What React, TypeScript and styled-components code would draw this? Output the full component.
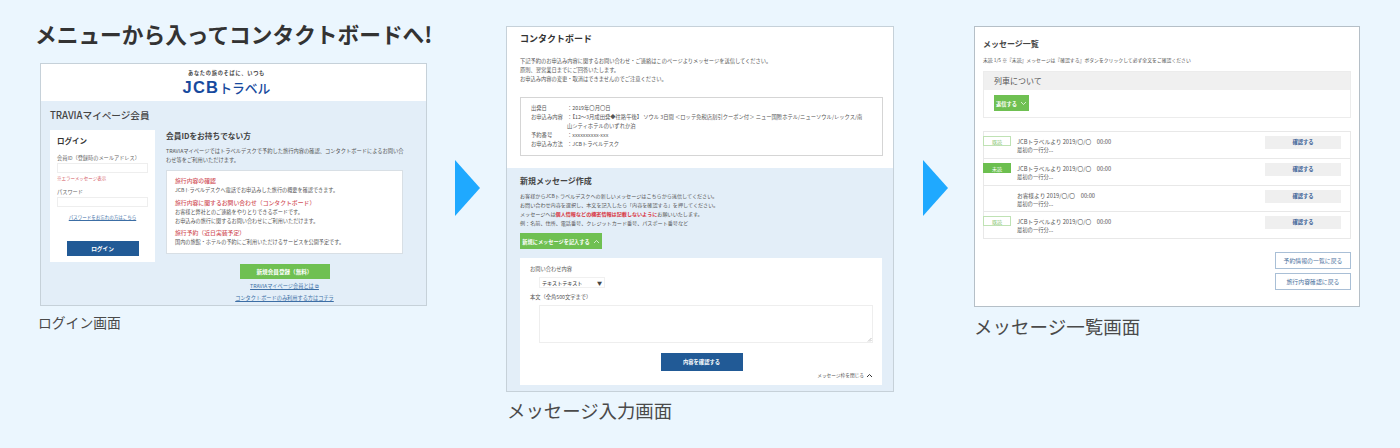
import * as React from 'react'
import styled, { createGlobalStyle } from 'styled-components'

const GlobalStyle = createGlobalStyle`
  html, body {
    margin: 0;
    padding: 0;
    background: #ebf6fe;
  }
  body {
    font-family: 'Noto Sans CJK JP', 'Liberation Sans', sans-serif;
    color: #444;
  }
`

const Page = styled.div`
  display: flex;
  align-items: flex-start;
  width: 1400px;
  height: 448px;
  padding-left: 36px;
  box-sizing: border-box;
  overflow: hidden;
`

const Column = styled.div<{ $width: number; $top: number }>`
  width: ${p => p.$width}px;
  padding-top: ${p => p.$top}px;
  flex: none;
`

const Headline = styled.h1`
  margin: 0 0 0 -1px;
  height: 63px;
  font-size: 21.7px;
  line-height: 67px;
  font-weight: 700;
  color: #333;
  white-space: nowrap;
`

const Arrow = styled.div<{ $left: number; $right: number }>`
  flex: none;
  width: 0;
  height: 0;
  margin: 160px ${p => p.$right}px 0 ${p => p.$left}px;
  border-left: 25px solid #1fa9ff;
  border-top: 28px solid transparent;
  border-bottom: 28px solid transparent;
`

const Shot = styled.div<{ $height: number; $indent?: number; $edge?: string }>`
  height: ${p => p.$height}px;
  margin-left: ${p => p.$indent ?? 0}px;
  box-sizing: border-box;
  border: 1px solid ${p => p.$edge ?? '#c6d1d9'};
  background: #fff;
  overflow: hidden;
  display: flex;
  flex-direction: column;
`

const Caption = styled.div<{ $size: number; $top: number; $indent?: number }>`
  margin-top: ${p => p.$top}px;
  margin-left: ${p => p.$indent ?? 0}px;
  font-size: ${p => p.$size}px;
  line-height: 1.3;
  color: #4a4a4a;
  white-space: nowrap;
`

const BrandBar = styled.div`
  height: 37px;
  flex: none;
  display: flex;
  flex-direction: column;
  align-items: center;
  padding: 5px 14px 0 0;
  box-sizing: border-box;
`

const Tagline = styled.div`
  font-size: 5.2px;
  line-height: 8px;
  font-weight: 700;
  letter-spacing: 0.75px;
  color: #444;
`

const Logo = styled.div`
  margin-top: 2px;
  display: flex;
  align-items: baseline;
  font-family: 'Liberation Sans', 'Noto Sans CJK JP', sans-serif;
  font-size: 16.5px;
  line-height: 17px;
  font-weight: 700;
  color: #174a9e;
  letter-spacing: 1.2px;
`

const LogoKana = styled.span`
  font-family: 'Noto Sans CJK JP', sans-serif;
  font-weight: 500;
  font-size: 12.8px;
  letter-spacing: 0;
`

const TintBody = styled.div`
  flex: 1;
  background: #e3eef8;
  padding: 6px 9px 0;
`

const PageTitle = styled.div`
  font-size: 9.6px;
  line-height: 16px;
  color: #444;
  font-weight: 500;
`

const LoginGrid = styled.div`
  display: flex;
  margin-top: 7px;
  gap: 11px;
`

const LoginCard = styled.div`
  width: 105px;
  height: 132px;
  flex: none;
  background: #fff;
  padding: 5px 7px 0;
  box-sizing: border-box;
  display: flex;
  flex-direction: column;
`

const CardTitle = styled.div`
  font-size: 7.5px;
  line-height: 12px;
  font-weight: 700;
  color: #333;
`

const Tiny = styled.div<{ $size?: number; $line?: number; $color?: string; $top?: number; $weight?: number }>`
  font-size: ${p => p.$size ?? 5.25}px;
  line-height: ${p => p.$line ?? 9}px;
  color: ${p => p.$color ?? '#555'};
  margin-top: ${p => p.$top ?? 0}px;
  font-weight: ${p => p.$weight ?? 400};
  white-space: nowrap;
`

const Alert = styled.b`
  color: #d8323c;
`

const TextField = styled.div`
  height: 10px;
  box-sizing: border-box;
  border: 1px solid #eee;
  background: #fff;
  margin-top: 1px;
`

const LinkText = styled.div<{ $top?: number; $size?: number }>`
  font-size: ${p => p.$size ?? 5.2}px;
  line-height: 8px;
  color: #3c6ea5;
  text-decoration: underline;
  text-align: center;
  margin-top: ${p => p.$top ?? 0}px;
  white-space: nowrap;
`

const SolidButton = styled.div<{ $width: number; $height: number; $color: string; $top?: number; $size?: number; $center?: boolean }>`
  width: ${p => p.$width}px;
  height: ${p => p.$height}px;
  background: ${p => p.$color};
  color: #fff;
  font-size: ${p => p.$size ?? 5.7}px;
  font-weight: 700;
  display: flex;
  align-items: center;
  justify-content: center;
  gap: 3px;
  flex: none;
  margin-top: ${p => p.$top ?? 0}px;
  margin-left: ${p => (p.$center ? 'auto' : '0')};
  margin-right: ${p => (p.$center ? 'auto' : '0')};
  white-space: nowrap;
`

const NoIdColumn = styled.div`
  flex: 1;
  min-width: 0;
  padding-right: 14px;
`

const SectionTitle = styled.div<{ $size?: number }>`
  font-size: ${p => p.$size ?? 8}px;
  line-height: 12px;
  font-weight: 700;
  color: #444;
`

const InfoBox = styled.div`
  height: 84px;
  background: #fff;
  border: 1px solid #d8dfe5;
  box-sizing: border-box;
  margin-top: 5px;
  padding: 5px 8px;
`

const RedHeading = styled.div<{ $top?: number }>`
  font-size: 5.85px;
  line-height: 9px;
  font-weight: 500;
  color: #d2545c;
  margin-top: ${p => p.$top ?? 0}px;
  white-space: nowrap;
`

const Register = styled.div`
  width: 237px;
  margin-left: 116px;
  margin-top: 2px;
`

const WhiteTop = styled.div`
  height: 141px;
  flex: none;
  padding: 4px 10px 0 13px;
  box-sizing: border-box;
`

const BoardTitle = styled.div`
  font-size: 9px;
  line-height: 16px;
  font-weight: 700;
  color: #333;
`

const Summary = styled.div`
  margin-top: 13px;
  height: 59px;
  border: 1px solid #d5d5d5;
  box-sizing: border-box;
  padding: 6px 10px 0;
`

const SummaryRow = styled.div`
  display: grid;
  grid-template-columns: 36px 1fr;
  font-size: 5.3px;
  line-height: 9px;
  color: #555;
  white-space: nowrap;
`

const ComposeSection = styled.div`
  flex: 1;
  background: #e3eef8;
  padding: 7px 11px 0 13px;
`

const WhitePanel = styled.div`
  margin-top: 9px;
  background: #fff;
  height: 127px;
  padding: 7px 9px 0 10px;
  box-sizing: border-box;
  display: flex;
  flex-direction: column;
`

const SelectBox = styled.div`
  width: 66px;
  height: 11px;
  margin: 3px 0 0 9px;
  border: 1px solid #f0f0f0;
  box-sizing: border-box;
  display: flex;
  align-items: center;
  justify-content: space-between;
  padding: 0 2px;
  font-size: 5.1px;
  font-weight: 500;
  color: #444;
`

const TextArea = styled.div`
  height: 38px;
  margin: 3px 0 0 9px;
  border: 1px solid #eee;
  box-sizing: border-box;
  display: flex;
  align-items: flex-end;
  justify-content: flex-end;
`

const CloseRow = styled.div`
  display: flex;
  justify-content: flex-end;
  align-items: center;
  gap: 2px;
  font-size: 4.7px;
  line-height: 8px;
  color: #555;
`

const ListShot = styled.div`
  padding: 11px 8px 0 8px;
  display: flex;
  flex-direction: column;
`

const TopicBox = styled.div`
  margin-top: 7px;
  height: 47px;
  border: 1px solid #ececec;
  box-sizing: border-box;
`

const TopicHead = styled.div`
  height: 18px;
  background: #f0f0f0;
  padding-left: 10px;
  font-size: 8px;
  line-height: 18px;
  color: #555;
`

const TopicBody = styled.div`
  padding: 5px 0 0 10px;
`

const MessageList = styled.div`
  margin-top: 13px;
  border: 1px solid #e8e8e8;
  box-sizing: border-box;
`

const MessageRow = styled.div`
  height: 26.4px;
  box-sizing: border-box;
  display: flex;
  align-items: flex-start;
  padding-top: 4px;
  & + & {
    border-top: 1px solid #e8e8e8;
  }
`

const Badge = styled.div<{ $unread?: boolean; $empty?: boolean }>`
  width: 28px;
  height: 10px;
  flex: none;
  box-sizing: border-box;
  margin-left: -1px;
  margin-right: 6px;
  font-size: 5px;
  line-height: 9px;
  text-align: center;
  visibility: ${p => (p.$empty ? 'hidden' : 'visible')};
  color: ${p => (p.$unread ? '#fff' : '#7fc36f')};
  background: ${p => (p.$unread ? '#6cbf4f' : '#fff')};
  border: 1px solid ${p => (p.$unread ? '#6cbf4f' : '#bfe2b4')};
`

const MessageText = styled.div`
  flex: 1;
  padding-top: 1px;
`

const ConfirmButton = styled.div`
  width: 76px;
  height: 13px;
  margin-right: 9px;
  background: #efefef;
  color: #3c6196;
  font-size: 5.3px;
  font-weight: 700;
  line-height: 13px;
  text-align: center;
`

const BackButton = styled.div<{ $top: number }>`
  width: 76px;
  height: 17px;
  margin: ${p => p.$top}px 0 0 auto;
  border: 1px solid #a9bfd6;
  box-sizing: border-box;
  background: #fff;
  color: #4a6f9c;
  font-size: 5.9px;
  line-height: 15px;
  text-align: center;
  white-space: nowrap;
`

const Chevron = ({ up, color, weight = 0.7 }: { up?: boolean; color: string; weight?: number }) => (
  <svg width="7" height="5" viewBox="0 0 7 5" fill="none">
    <path d={up ? 'M1 4 L3.5 1.5 L6 4' : 'M1 1 L3.5 3.5 L6 1'} stroke={color} strokeWidth={weight} />
  </svg>
)

const messages = [
  { badge: '既読', from: 'JCBトラベルより 2019/〇/〇　00:00' },
  { badge: '未読', from: 'JCBトラベルより 2019/〇/〇　00:00', unread: true },
  { badge: '', from: 'お客様より 2019/〇/〇　00:00' },
  { badge: '既読', from: 'JCBトラベルより 2019/〇/〇　00:00' },
]

function LoginScreen() {
  return (
    <Shot $height={243} $indent={4}>
      <BrandBar>
        <Tagline>あなたの旅のそばに、いつも</Tagline>
        <Logo>
          JCB
          <LogoKana>トラベル</LogoKana>
        </Logo>
      </BrandBar>
      <TintBody>
        <PageTitle>TRAVIAマイページ会員</PageTitle>
        <LoginGrid>
          <LoginCard>
            <CardTitle>ログイン</CardTitle>
            <Tiny $top={6} $color="#666" $size={5.2}>会員ID（登録時のメールアドレス）</Tiny>
            <TextField />
            <Tiny $size={4.5} $line={8} $color="#d2545c" $top={1}>※エラーメッセージ表示</Tiny>
            <Tiny $top={5} $color="#666" $size={5.2}>パスワード</Tiny>
            <TextField />
            <LinkText $top={6} $size={4.5}>パスワードをお忘れの方はこちら</LinkText>
            <SolidButton $width={72} $height={15} $color="#215a96" $top={20} $center>ログイン</SolidButton>
          </LoginCard>
          <NoIdColumn>
            <SectionTitle $size={7.7}>会員IDをお持ちでない方</SectionTitle>
            <Tiny $top={5}>TRAVIAマイページではトラベルデスクで予約した旅行内容の確認、コンタクトボードによるお問い合</Tiny>
            <Tiny>わせ等をご利用いただけます。</Tiny>
            <InfoBox>
              <RedHeading>旅行内容の確認</RedHeading>
              <Tiny $size={5.15}>JCBトラベルデスクへ電話でお申込みした旅行の概要を確認できます。</Tiny>
              <RedHeading $top={3.5}>旅行内容に関するお問い合わせ（コンタクトボード）</RedHeading>
              <Tiny $size={5.15}>お客様と弊社とのご連絡をやりとりできるボードです。</Tiny>
              <Tiny $size={5.15}>お申込みの旅行に関するお問い合わせにご利用いただけます。</Tiny>
              <RedHeading $top={3.5}>旅行予約（近日実装予定）</RedHeading>
              <Tiny $size={5.15}>国内の旅館・ホテルの予約にご利用いただけるサービスを公開予定です。</Tiny>
            </InfoBox>
          </NoIdColumn>
        </LoginGrid>
        <Register>
          <SolidButton $width={90} $height={15} $color="#6fc052" $center $size={5.6}>新規会員登録（無料）</SolidButton>
          <LinkText $top={3}>TRAVIAマイページ会員とは ⧉</LinkText>
          <LinkText $top={4}>コンタクトボードのみ利用する方はコチラ</LinkText>
        </Register>
      </TintBody>
    </Shot>
  )
}

function InputScreen() {
  return (
    <Shot $height={366}>
      <WhiteTop>
        <BoardTitle>コンタクトボード</BoardTitle>
        <Tiny $top={10}>下記予約のお申込み内容に関するお問い合わせ・ご連絡はこのページよりメッセージを送信してください。</Tiny>
        <Tiny>原則、翌営業日までにご回答いたします。</Tiny>
        <Tiny>お申込み内容の変更・取消はできませんのでご注意ください。</Tiny>
        <Summary>
          <SummaryRow><span>出発日</span><span>：2019年〇月〇日</span></SummaryRow>
          <SummaryRow><span>お申込み内容</span><span>：【12～3月成田発◆往路午後】 ソウル 3日間 ＜ロッテ免税店割引クーポン付＞ ニュー国際ホテル/ニューソウル/レックス/南<br />山シティホテルのいずれか泊</span></SummaryRow>
          <SummaryRow><span>予約番号</span><span>：xxxxxxxxxx-xxx</span></SummaryRow>
          <SummaryRow><span>お申込み方法</span><span>：JCBトラベルデスク</span></SummaryRow>
        </Summary>
      </WhiteTop>
      <ComposeSection>
        <SectionTitle>新規メッセージ作成</SectionTitle>
        <Tiny $top={4} $size={5.1}>お客様からJCBトラベルデスクへの新しいメッセージはこちらから送信してください。</Tiny>
        <Tiny $size={5.1}>お問い合わせ内容を選択し、本文を記入したら「内容を確認する」を押してください。</Tiny>
        <Tiny $size={5.1}>メッセージへは<Alert>個人情報などの機密情報は記載しないように</Alert>お願いいたします。</Tiny>
        <Tiny $size={5.1}>例：名前、住所、電話番号、クレジットカード番号、パスポート番号など</Tiny>
        <SolidButton $width={82} $height={16} $color="#6fc052" $top={6} $size={5.2}>
          新規にメッセージを記入する <Chevron up color="#fff" />
        </SolidButton>
        <WhitePanel>
          <Tiny>お問い合わせ内容</Tiny>
          <SelectBox><span>テキストテキスト</span><span>▼</span></SelectBox>
          <Tiny $top={5}>本文（全角500文字まで）</Tiny>
          <TextArea>
            <svg width="5" height="5" viewBox="0 0 5 5">
              <path d="M1 4.5 L4.5 1 M3 4.5 L4.5 3" stroke="#999" strokeWidth="0.6" />
            </svg>
          </TextArea>
          <SolidButton $width={82} $height={18} $color="#215a96" $top={10} $center $size={5.3}>内容を確認する</SolidButton>
          <CloseRow>メッセージ枠を閉じる <Chevron up color="#333" weight={1} /></CloseRow>
        </WhitePanel>
      </ComposeSection>
    </Shot>
  )
}

function ListScreen() {
  return (
    <Shot $height={281} $edge="#b5bfc7">
      <ListShot>
        <SectionTitle>メッセージ一覧</SectionTitle>
        <Tiny $top={5} $size={4.85}>未読 1/5 ※『未読』メッセージは『確認する』ボタンをクリックして必ず全文をご確認ください</Tiny>
        <TopicBox>
          <TopicHead>列車について</TopicHead>
          <TopicBody>
            <SolidButton $width={35} $height={16} $color="#6fc052" $size={5.2}>
              返信する <Chevron color="#fff" />
            </SolidButton>
          </TopicBody>
        </TopicBox>
        <MessageList>
          {messages.map((m, i) => (
            <MessageRow key={i}>
              <Badge $unread={m.unread} $empty={!m.badge}>{m.badge}</Badge>
              <MessageText>
                <Tiny $size={5.7}>{m.from}</Tiny>
                <Tiny $size={5.3}>最初の一行分...</Tiny>
              </MessageText>
              <ConfirmButton>確認する</ConfirmButton>
            </MessageRow>
          ))}
        </MessageList>
        <BackButton $top={13}>予約情報の一覧に戻る</BackButton>
        <BackButton $top={4}>旅行内容確認に戻る</BackButton>
      </ListShot>
    </Shot>
  )
}

export default function App() {
  return (
    <>
      <GlobalStyle />
      <Page>
        <Column $width={391} $top={0}>
          <Headline>メニューから入ってコンタクトボードへ!</Headline>
          <LoginScreen />
          <Caption $size={13.8} $top={8} $indent={2}>ログイン画面</Caption>
        </Column>
        <Arrow $left={28} $right={26} />
        <Column $width={388} $top={26}>
          <InputScreen />
          <Caption $size={18.4} $top={7} $indent={1}>メッセージ入力画面</Caption>
        </Column>
        <Arrow $left={29} $right={26} />
        <Column $width={386} $top={26}>
          <ListScreen />
          <Caption $size={18.5} $top={7}>メッセージ一覧画面</Caption>
        </Column>
      </Page>
    </>
  )
}
